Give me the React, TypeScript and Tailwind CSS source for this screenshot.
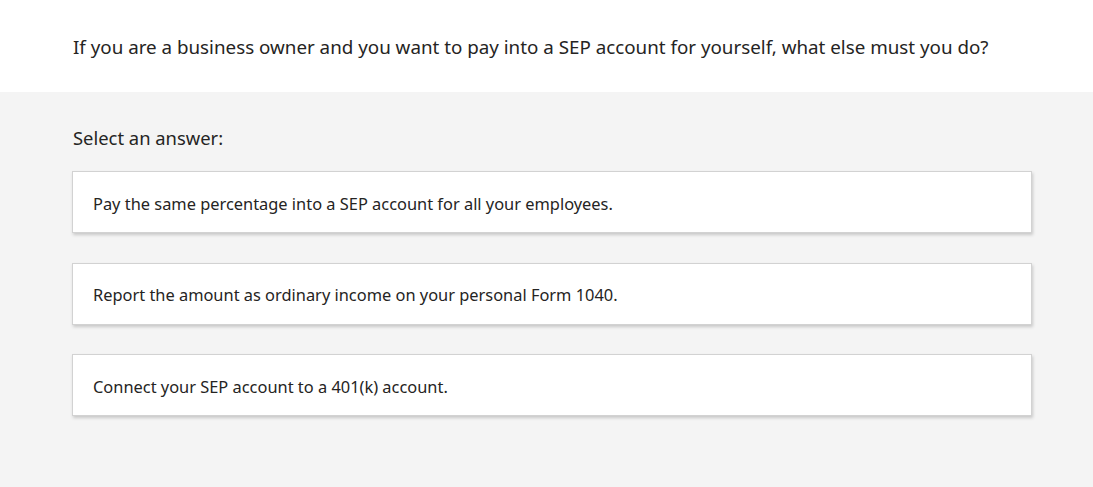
import React from "react";

const answers = [
  "Pay the same percentage into a SEP account for all your employees.",
  "Report the amount as ordinary income on your personal Form 1040.",
  "Connect your SEP account to a 401(k) account.",
];

export default function App() {
  return (
    <div
      className="w-[1093px] h-[487px] overflow-hidden flex flex-col text-[#252423]"
      style={{ fontFamily: '"Segoe UI", "Noto Sans", "Open Sans", sans-serif' }}
    >
      <div className="bg-white h-[92px] shrink-0 pl-[73px] pt-[34px]">
        <p className="text-[18.8px] leading-[26px] m-0">
          If you are a business owner and you want to pay into a SEP account for yourself, what else must you do?
        </p>
      </div>
      <div className="bg-[#f4f4f4] flex-1 pl-[72px] pr-[61px] pt-[34px]">
        <p className="text-[18.4px] leading-[24px] pl-[1px] mb-[21px]">Select an answer:</p>
        <div className="flex flex-col gap-[29.5px]">
          {answers.map((a) => (
            <div
              key={a}
              className="bg-white border border-[#d2d2d2] h-[62px] flex items-center pl-[20px] shadow-[1px_2px_3px_rgba(0,0,0,0.18)]"
            >
              <span className="text-[16.4px] leading-[22px] pt-[3px]">{a}</span>
            </div>
          ))}
        </div>
      </div>
    </div>
  );
}
